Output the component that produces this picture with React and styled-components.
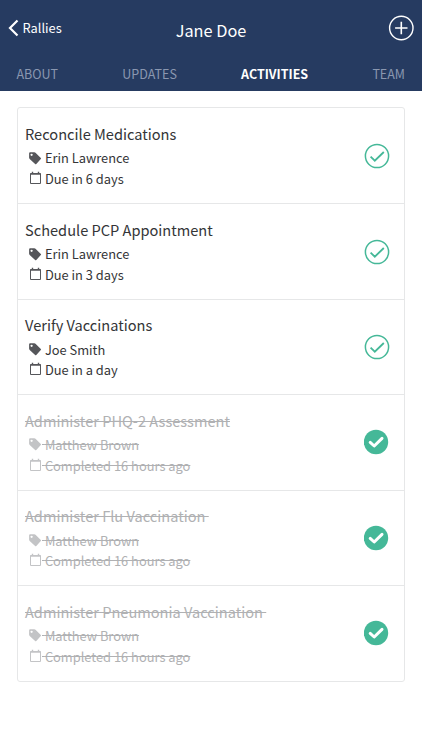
import React, { Component } from 'react';
import styled, { createGlobalStyle } from 'styled-components';

const GlobalStyle = createGlobalStyle`
  * {
    box-sizing: border-box;
  }
  body {
    margin: 0;
    background: #fff;
    font-family: 'Noto Sans CJK SC', 'Noto Sans', sans-serif;
  }
`;

const Header = styled.header`
  height: 91px;
  background: #263b61;
  color: #fff;
`;

const TopBar = styled.div`
  display: grid;
  grid-template-columns: 1fr auto 1fr;
  height: 56px;
  padding: 0 8px;
`;

const BackButton = styled.div`
  display: flex;
  align-items: center;
  gap: 3.5px;
  height: 55px;
  font-size: 12.8px;
  line-height: 20px;
`;

const Title = styled.h1`
  margin: 0;
  padding-top: 18px;
  font-size: 16.3px;
  font-weight: 400;
  line-height: 24px;
`;

const AddButton = styled.div`
  display: flex;
  align-items: center;
  justify-content: flex-end;
  height: 56px;
`;

const Tabs = styled.nav`
  display: flex;
  justify-content: space-between;
  padding: 8px 17px 0 16.5px;
`;

const Tab = styled.div`
  font-size: 12.5px;
  line-height: 20px;
  font-weight: ${props => (props.$active ? 700 : 400)};
  color: ${props => (props.$active ? '#fff' : '#8a97b0')};
`;

const List = styled.div`
  margin: 16px 17px 0;
  border: 1px solid #e6e7e8;
  border-radius: 3px;
`;

const Row = styled.div`
  display: flex;
  align-items: center;
  justify-content: space-between;
  height: 95.45px;
  padding: 0 14px 0.2px 7px;
  color: ${props => (props.$done ? '#b0b1b3' : '#343537')};
  text-decoration: ${props => (props.$done ? 'line-through' : 'none')};

  & + & {
    border-top: 1px solid #e6e7e8;
  }
`;

const ActivityName = styled.div`
  margin-bottom: 2.4px;
  font-size: 14.6px;
  line-height: 24px;
  white-space: pre;
`;

const Meta = styled.div`
  display: flex;
  align-items: center;
  padding-left: 3px;
  font-size: 12.85px;
  line-height: 20.5px;
  white-space: pre;
`;

const MetaIcon = styled.svg`
  flex: none;
  width: 14px;
  height: 14px;
  margin-bottom: 2px;
  color: ${props => (props.$done ? '#c3c4c6' : '#55565a')};
`;

const TagIcon = ({ done }) => (
  <MetaIcon $done={done} viewBox="0 0 14 14">
    <path
      fill="currentColor"
      fillRule="evenodd"
      d="M1.1 2.4Q1.1 1.3 2.2 1.3H6.4Q7 1.3 7.5 1.8L12.8 6.9Q13.4 7.5 12.8 8.1L8.3 12.9Q7.7 13.4 7.1 12.9L1.7 7.9Q1.1 7.3 1.1 6.7ZM3.6 2.7A1.15 1.15 0 1 0 3.6 5A1.15 1.15 0 1 0 3.6 2.7Z"
    />
  </MetaIcon>
);

const CalendarIcon = ({ done }) => (
  <MetaIcon $done={done} viewBox="0 0 14 14" fill="none" stroke="currentColor">
    <path d="M2.5 2.5H12.5V12.5H2.5Z" />
    <path d="M2.5 3H12.5M4.5 .8V3.5M10.5 .8V3.5" strokeWidth="1.4" />
  </MetaIcon>
);

const StatusIcon = ({ done }) => (
  <svg width="26" height="26" viewBox="0 0 26 26" fill="none">
    {done ? (
      <>
        <circle cx="12" cy="13" r="12.2" fill="#45b898" />
        <path
          d="M6.2 13.4L10.2 17L18 9.4"
          stroke="#fff"
          strokeWidth="3"
          strokeLinecap="round"
          strokeLinejoin="round"
        />
      </>
    ) : (
      <>
        <circle cx="13" cy="13" r="11.6" stroke="#45b898" strokeWidth="1.5" />
        <path d="M6.6 13.6L10.8 17.7L19.8 9" stroke="#45b898" strokeWidth="1.8" />
      </>
    )}
  </svg>
);

const tabs = ['ABOUT', 'UPDATES', 'ACTIVITIES', 'TEAM'];

const activities = [
  { name: 'Reconcile Medications', person: 'Erin Lawrence', when: 'Due in 6 days' },
  { name: 'Schedule PCP Appointment', person: 'Erin Lawrence', when: 'Due in 3 days' },
  { name: 'Verify Vaccinations', person: 'Joe Smith', when: 'Due in a day' },
  {
    name: 'Administer PHQ-2 Assessment',
    person: 'Matthew Brown',
    when: 'Completed 16 hours ago',
    done: true,
  },
  {
    name: 'Administer Flu Vaccination ',
    person: 'Matthew Brown',
    when: 'Completed 16 hours ago',
    done: true,
  },
  {
    name: 'Administer Pneumonia Vaccination ',
    person: 'Matthew Brown',
    when: 'Completed 16 hours ago',
    done: true,
  },
];

export default class App extends Component {
  state = { tab: 'ACTIVITIES' };

  // renderActivity draws one row of the list, struck through when it is completed.
  renderActivity({ name, person, when, done }) {
    return (
      <Row key={name} $done={done}>
        <div>
          <ActivityName>{name}</ActivityName>
          <Meta>
            <TagIcon done={done} />
            <span> {person}</span>
          </Meta>
          <Meta>
            <CalendarIcon done={done} />
            <span> {when}</span>
          </Meta>
        </div>
        <StatusIcon done={done} />
      </Row>
    );
  }

  render() {
    return (
      <>
        <GlobalStyle />
        <Header>
          <TopBar>
            <BackButton>
              <svg width="11" height="18" viewBox="0 0 11 18" fill="none">
                <path d="M9.5 1.5L2 9L9.5 16.5" stroke="#fff" strokeWidth="2.2" />
              </svg>
              Rallies
            </BackButton>
            <Title>Jane Doe</Title>
            <AddButton>
              <svg width="26" height="26" viewBox="0 0 26 26" fill="none" stroke="#fff">
                <circle cx="13.3" cy="13" r="11.7" strokeWidth="1.4" />
                <path d="M13.3 6.8V19.2M7.1 13H19.5" strokeWidth="1.6" />
              </svg>
            </AddButton>
          </TopBar>
          <Tabs>
            {tabs.map(tab => (
              <Tab
                key={tab}
                $active={tab === this.state.tab}
                onClick={() => this.setState({ tab })}>
                {tab}
              </Tab>
            ))}
          </Tabs>
        </Header>
        <List>{activities.map(this.renderActivity)}</List>
      </>
    );
  }
}
